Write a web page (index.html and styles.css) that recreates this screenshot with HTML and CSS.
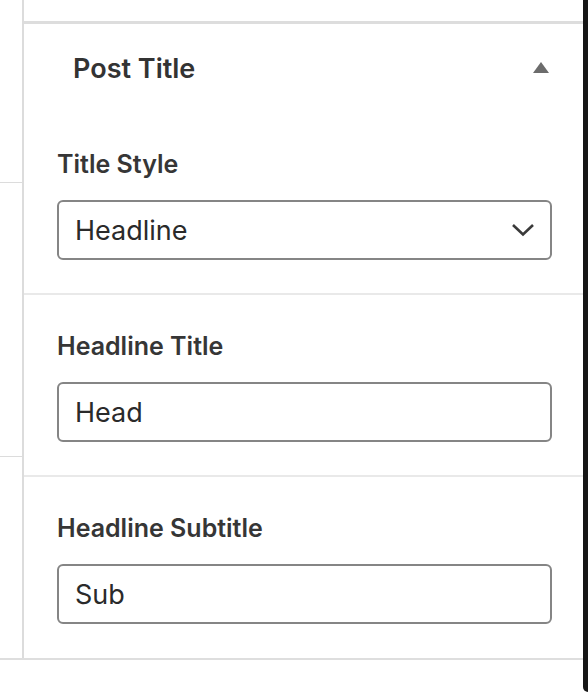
FILE: index.html
```html
<!DOCTYPE html>
<html lang="en">
<head>
<meta charset="utf-8">
<title>Post Title</title>
<link rel="stylesheet" href="styles.css">
</head>
<body>
<div class="frame">
  <div class="workspace">
    <div class="content">
      <div class="gutter">
        <div class="gutter-row gutter-row-1"></div>
        <div class="gutter-row gutter-row-2"></div>
      </div>
      <div class="sidebar">
        <div class="prev-panel"></div>
        <div class="panel">
          <div class="panel-header">
            <h2 class="panel-title">Post Title</h2>
            <svg class="toggle" width="16" height="11" viewBox="0 0 16 11" aria-hidden="true"><polygon points="0,11 8,0 16,11" fill="#6c6c6c"/></svg>
          </div>
          <div class="field field-first">
            <label class="label">Title Style</label>
            <div class="control select">
              <span class="value">Headline</span>
              <svg class="chevron" width="24" height="14" viewBox="0 0 24 14" aria-hidden="true"><polyline points="2,2 12,11.5 22,2" fill="none" stroke="#3a3a3a" stroke-width="2.6"/></svg>
            </div>
          </div>
          <div class="field">
            <label class="label">Headline Title</label>
            <div class="control"><span class="value">Head</span></div>
          </div>
          <div class="field">
            <label class="label">Headline Subtitle</label>
            <div class="control"><span class="value">Sub</span></div>
          </div>
        </div>
      </div>
    </div>
  </div>
  <div class="edge"></div>
</div>
</body>
</html>
```
FILE: styles.css
```css
* { box-sizing: border-box; }
html, body { margin: 0; padding: 0; background: #fff; }
body {
  font-family: Inter, "Noto Sans", "Liberation Sans", sans-serif;
  color: #303030;
}
.frame {
  display: flex;
  width: 588px;
  height: 696px;
  overflow: hidden;
}
.workspace {
  flex: 1;
  display: flex;
  flex-direction: column;
}
.content {
  display: flex;
  height: 660px;
  border-bottom: 2px solid #dedede;
}
.gutter {
  width: 22px;
  display: flex;
  flex-direction: column;
}
.gutter-row { border-bottom: 1px solid #dcdcdc; }
.gutter-row-1 { height: 183px; }
.gutter-row-2 { height: 274px; }
.sidebar {
  flex: 1;
  border-left: 2px solid #dcdcdc;
  display: flex;
  flex-direction: column;
}
.prev-panel { height: 21px; }
.panel {
  border-top: 3px solid #dddddd;
  flex: 1;
  display: flex;
  flex-direction: column;
}
.panel-header {
  height: 89px;
  display: flex;
  align-items: center;
  justify-content: space-between;
  padding: 0 34px 0 49px;
}
.panel-title {
  margin: 0;
  font-size: 27px;
  font-weight: 600;
  line-height: 1;
  color: #333;
}
.toggle { display: block; margin-top: -3px; }
.field {
  padding: 36px 31px 33px 33px;
  border-top: 2px solid #e9e9e9;
  display: flex;
  flex-direction: column;
}
.field-first { border-top: none; padding-top: 36px; padding-bottom: 33px; }
.field:last-child { flex: 1; }
.label {
  display: block;
  font-size: 25px;
  font-weight: 600;
  line-height: 30px;
  color: #363636;
  margin-bottom: 21px;
}
.control {
  height: 60px;
  border: 2px solid #858585;
  border-radius: 6px;
  display: flex;
  align-items: center;
  justify-content: space-between;
  padding: 0 15px 0 16px;
  background: #fff;
}
.value {
  font-size: 27px;
  line-height: 1;
  color: #2a2a2a;
}
.chevron { display: block; }
.edge {
  width: 5px;
  height: 692px;
  background: #161616;
  border-bottom-left-radius: 6px;
}
```
